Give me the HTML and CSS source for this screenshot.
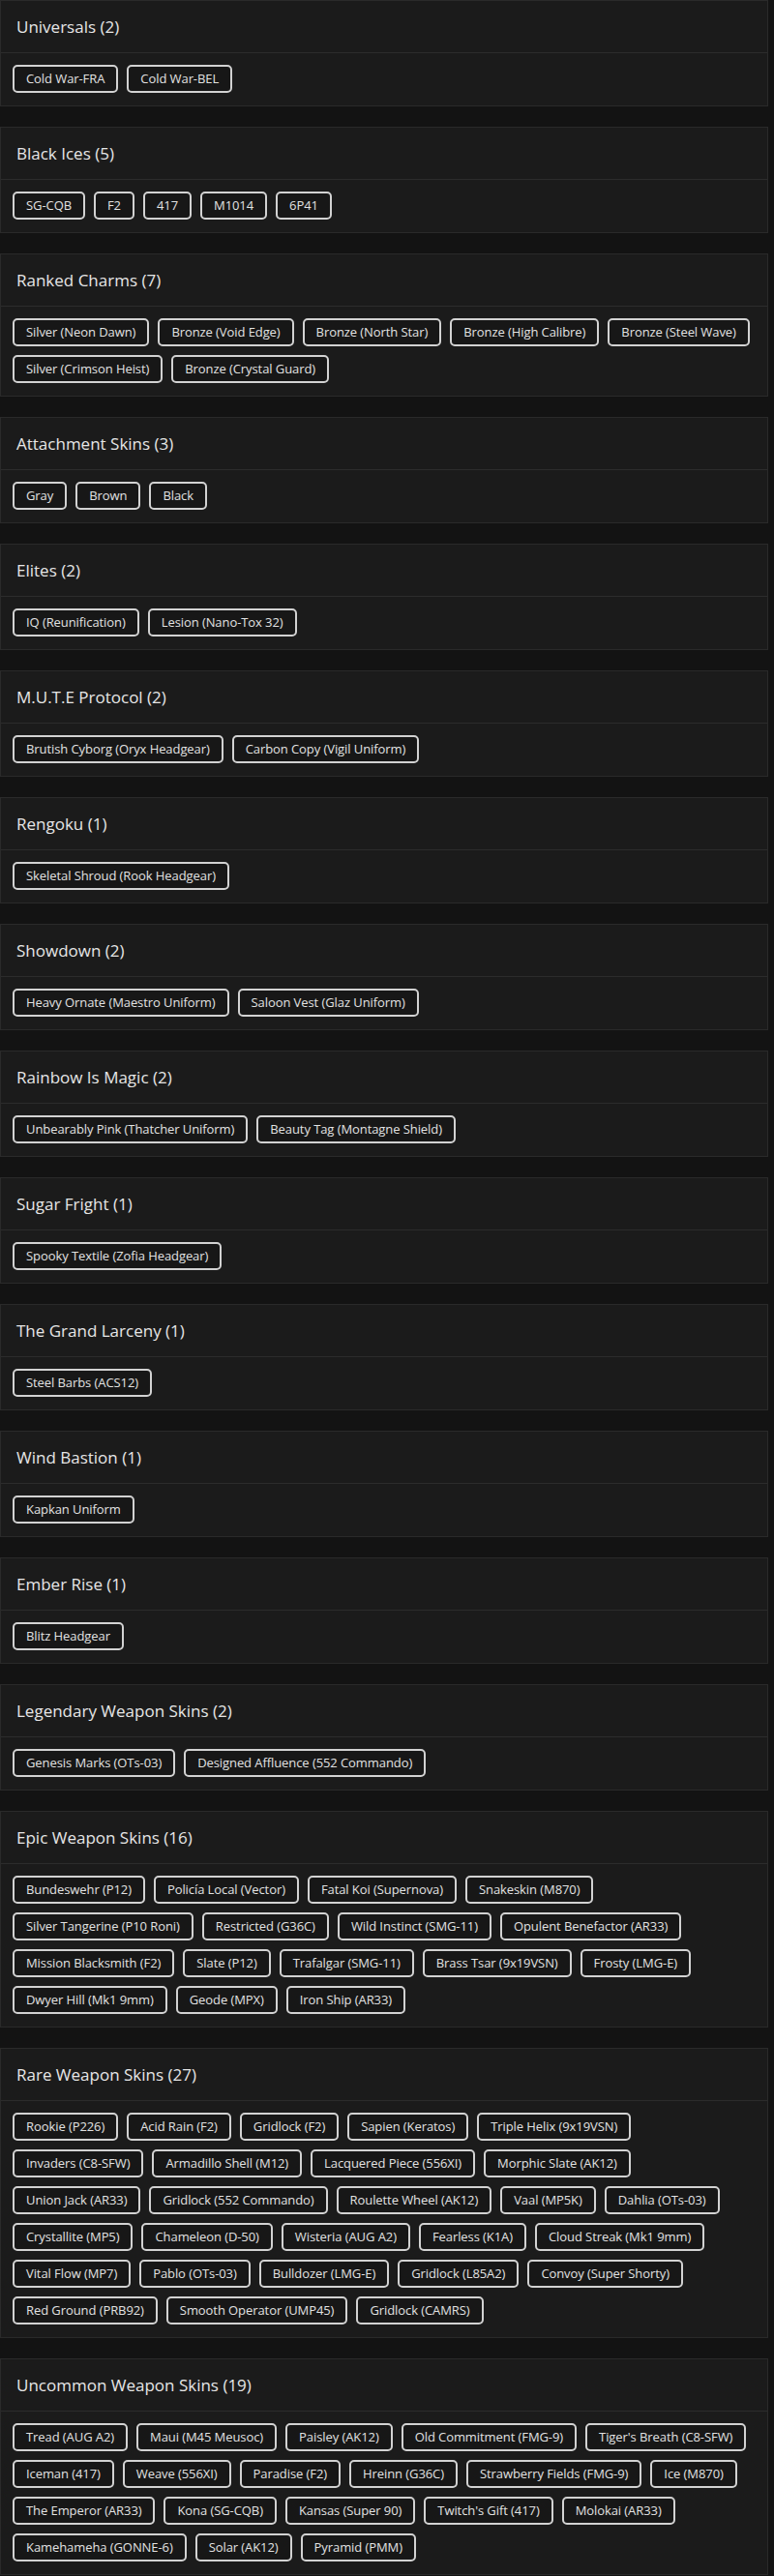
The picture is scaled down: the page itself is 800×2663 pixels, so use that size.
FILE: index.html
```html
<!DOCTYPE html>
<html lang="en">
<head>
<meta charset="utf-8">
<title>Collection</title>
<link rel="stylesheet" href="styles.css">
</head>
<body>
<main class="page">

<section class="card">
  <header class="card-header"><h2 class="card-title">Universals (2)</h2></header>
  <div class="card-body">
    <div class="row"><span class="badge">Cold War-FRA</span><span class="badge">Cold War-BEL</span></div>
  </div>
</section>

<section class="card">
  <header class="card-header"><h2 class="card-title">Black Ices (5)</h2></header>
  <div class="card-body">
    <div class="row"><span class="badge">SG-CQB</span><span class="badge">F2</span><span class="badge">417</span><span class="badge">M1014</span><span class="badge">6P41</span></div>
  </div>
</section>

<section class="card">
  <header class="card-header"><h2 class="card-title">Ranked Charms (7)</h2></header>
  <div class="card-body">
    <div class="row"><span class="badge">Silver (Neon Dawn)</span><span class="badge">Bronze (Void Edge)</span><span class="badge">Bronze (North Star)</span><span class="badge">Bronze (High Calibre)</span><span class="badge">Bronze (Steel Wave)</span></div>
    <div class="row"><span class="badge">Silver (Crimson Heist)</span><span class="badge">Bronze (Crystal Guard)</span></div>
  </div>
</section>

<section class="card">
  <header class="card-header"><h2 class="card-title">Attachment Skins (3)</h2></header>
  <div class="card-body">
    <div class="row"><span class="badge">Gray</span><span class="badge">Brown</span><span class="badge">Black</span></div>
  </div>
</section>

<section class="card">
  <header class="card-header"><h2 class="card-title">Elites (2)</h2></header>
  <div class="card-body">
    <div class="row"><span class="badge">IQ (Reunification)</span><span class="badge">Lesion (Nano-Tox 32)</span></div>
  </div>
</section>

<section class="card">
  <header class="card-header"><h2 class="card-title">M.U.T.E Protocol (2)</h2></header>
  <div class="card-body">
    <div class="row"><span class="badge">Brutish Cyborg (Oryx Headgear)</span><span class="badge">Carbon Copy (Vigil Uniform)</span></div>
  </div>
</section>

<section class="card">
  <header class="card-header"><h2 class="card-title">Rengoku (1)</h2></header>
  <div class="card-body">
    <div class="row"><span class="badge">Skeletal Shroud (Rook Headgear)</span></div>
  </div>
</section>

<section class="card">
  <header class="card-header"><h2 class="card-title">Showdown (2)</h2></header>
  <div class="card-body">
    <div class="row"><span class="badge">Heavy Ornate (Maestro Uniform)</span><span class="badge">Saloon Vest (Glaz Uniform)</span></div>
  </div>
</section>

<section class="card">
  <header class="card-header"><h2 class="card-title">Rainbow Is Magic (2)</h2></header>
  <div class="card-body">
    <div class="row"><span class="badge">Unbearably Pink (Thatcher Uniform)</span><span class="badge">Beauty Tag (Montagne Shield)</span></div>
  </div>
</section>

<section class="card">
  <header class="card-header"><h2 class="card-title">Sugar Fright (1)</h2></header>
  <div class="card-body">
    <div class="row"><span class="badge">Spooky Textile (Zofia Headgear)</span></div>
  </div>
</section>

<section class="card">
  <header class="card-header"><h2 class="card-title">The Grand Larceny (1)</h2></header>
  <div class="card-body">
    <div class="row"><span class="badge">Steel Barbs (ACS12)</span></div>
  </div>
</section>

<section class="card">
  <header class="card-header"><h2 class="card-title">Wind Bastion (1)</h2></header>
  <div class="card-body">
    <div class="row"><span class="badge">Kapkan Uniform</span></div>
  </div>
</section>

<section class="card">
  <header class="card-header"><h2 class="card-title">Ember Rise (1)</h2></header>
  <div class="card-body">
    <div class="row"><span class="badge">Blitz Headgear</span></div>
  </div>
</section>

<section class="card">
  <header class="card-header"><h2 class="card-title">Legendary Weapon Skins (2)</h2></header>
  <div class="card-body">
    <div class="row"><span class="badge">Genesis Marks (OTs-03)</span><span class="badge">Designed Affluence (552 Commando)</span></div>
  </div>
</section>

<section class="card">
  <header class="card-header"><h2 class="card-title">Epic Weapon Skins (16)</h2></header>
  <div class="card-body">
    <div class="row"><span class="badge">Bundeswehr (P12)</span><span class="badge">Policía Local (Vector)</span><span class="badge">Fatal Koi (Supernova)</span><span class="badge">Snakeskin (M870)</span></div>
    <div class="row"><span class="badge">Silver Tangerine (P10 Roni)</span><span class="badge">Restricted (G36C)</span><span class="badge">Wild Instinct (SMG-11)</span><span class="badge">Opulent Benefactor (AR33)</span></div>
    <div class="row"><span class="badge">Mission Blacksmith (F2)</span><span class="badge">Slate (P12)</span><span class="badge">Trafalgar (SMG-11)</span><span class="badge">Brass Tsar (9x19VSN)</span><span class="badge">Frosty (LMG-E)</span></div>
    <div class="row"><span class="badge">Dwyer Hill (Mk1 9mm)</span><span class="badge">Geode (MPX)</span><span class="badge">Iron Ship (AR33)</span></div>
  </div>
</section>

<section class="card">
  <header class="card-header"><h2 class="card-title">Rare Weapon Skins (27)</h2></header>
  <div class="card-body">
    <div class="row"><span class="badge">Rookie (P226)</span><span class="badge">Acid Rain (F2)</span><span class="badge">Gridlock (F2)</span><span class="badge">Sapien (Keratos)</span><span class="badge">Triple Helix (9x19VSN)</span></div>
    <div class="row"><span class="badge">Invaders (C8-SFW)</span><span class="badge">Armadillo Shell (M12)</span><span class="badge">Lacquered Piece (556XI)</span><span class="badge">Morphic Slate (AK12)</span></div>
    <div class="row"><span class="badge">Union Jack (AR33)</span><span class="badge">Gridlock (552 Commando)</span><span class="badge">Roulette Wheel (AK12)</span><span class="badge">Vaal (MP5K)</span><span class="badge">Dahlia (OTs-03)</span></div>
    <div class="row"><span class="badge">Crystallite (MP5)</span><span class="badge">Chameleon (D-50)</span><span class="badge">Wisteria (AUG A2)</span><span class="badge">Fearless (K1A)</span><span class="badge">Cloud Streak (Mk1 9mm)</span></div>
    <div class="row"><span class="badge">Vital Flow (MP7)</span><span class="badge">Pablo (OTs-03)</span><span class="badge">Bulldozer (LMG-E)</span><span class="badge">Gridlock (L85A2)</span><span class="badge">Convoy (Super Shorty)</span></div>
    <div class="row"><span class="badge">Red Ground (PRB92)</span><span class="badge">Smooth Operator (UMP45)</span><span class="badge">Gridlock (CAMRS)</span></div>
  </div>
</section>

<section class="card">
  <header class="card-header"><h2 class="card-title">Uncommon Weapon Skins (19)</h2></header>
  <div class="card-body">
    <div class="row"><span class="badge">Tread (AUG A2)</span><span class="badge">Maui (M45 Meusoc)</span><span class="badge">Paisley (AK12)</span><span class="badge">Old Commitment (FMG-9)</span><span class="badge">Tiger's Breath (C8-SFW)</span></div>
    <div class="row"><span class="badge">Iceman (417)</span><span class="badge">Weave (556XI)</span><span class="badge">Paradise (F2)</span><span class="badge">Hreinn (G36C)</span><span class="badge">Strawberry Fields (FMG-9)</span><span class="badge">Ice (M870)</span></div>
    <div class="row"><span class="badge">The Emperor (AR33)</span><span class="badge">Kona (SG-CQB)</span><span class="badge">Kansas (Super 90)</span><span class="badge">Twitch's Gift (417)</span><span class="badge">Molokai (AR33)</span></div>
    <div class="row"><span class="badge">Kamehameha (GONNE-6)</span><span class="badge">Solar (AK12)</span><span class="badge">Pyramid (PMM)</span></div>
  </div>
</section>

</main>
</body>
</html>
```

FILE: styles.css
```css
html, body {
  margin: 0;
  padding: 0;
  background: #131313;
}

body {
  font-family: "Open Sans", "Liberation Sans", sans-serif;
  color: #e4e4e4;
}

.page {
  width: 794px;
  display: flex;
  flex-direction: column;
  gap: 21px;
}

.card {
  background: #1b1b1b;
  border: 1px solid #2a2a2a;
}

.card-header {
  padding: 16px 16px;
  border-bottom: 1px solid #2c2c2c;
}

.card-title {
  margin: 0;
  font-size: 17px;
  line-height: 21px;
  font-weight: 500;
  color: #e6e6e6;
}

.card-body {
  padding: 12px 12px 13px 12px;
  display: flex;
  flex-direction: column;
  gap: 9px;
}

.row {
  display: flex;
  gap: 9px;
  white-space: nowrap;
}

.badge {
  display: inline-block;
  padding: 4px 12px;
  font-size: 13px;
  line-height: 17px;
  letter-spacing: -0.08px;
  color: #e2e2e2;
  background: #171717;
  border: 2px solid #d2d2d2;
  border-radius: 5px;
}
```
